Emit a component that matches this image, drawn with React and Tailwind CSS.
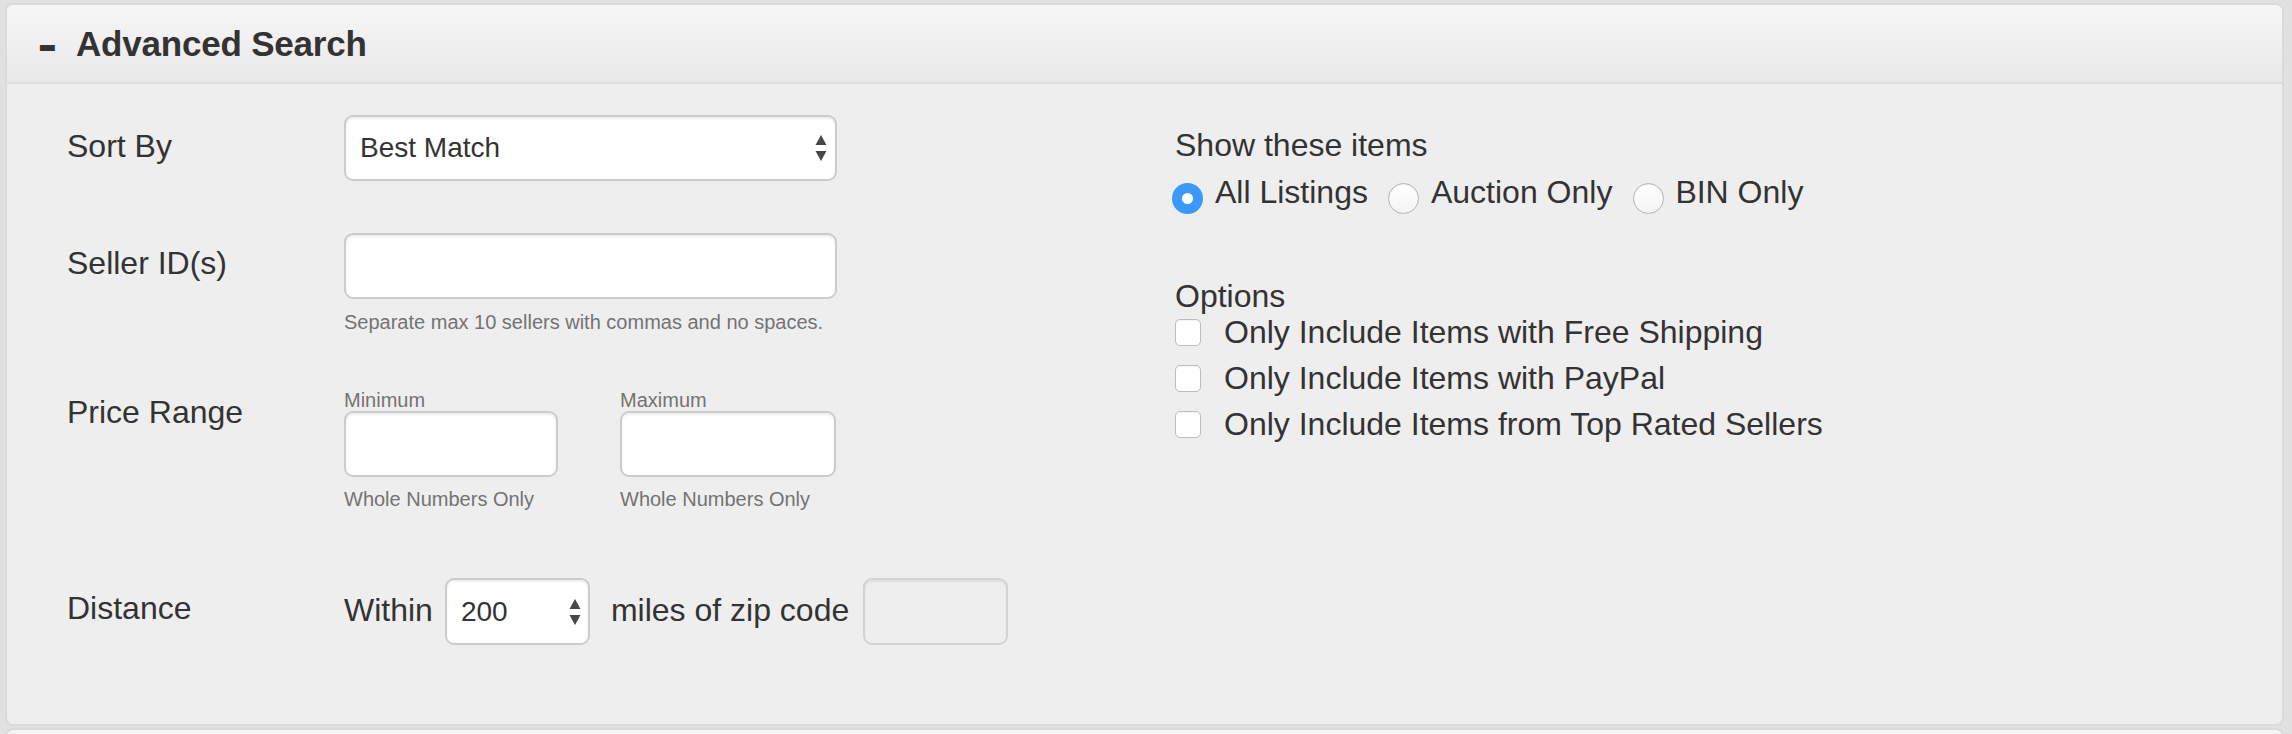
import React from "react";

// =====================================================
// SMALL PARTS
// =====================================================

const SelectArrows = () => (
  <svg width="12" height="28" viewBox="0 0 12 28" className="shrink-0">
    <path d="M6 1 L11.5 11 L0.5 11 Z" fill="#474747" />
    <path d="M0.5 17 L11.5 17 L6 27 Z" fill="#474747" />
  </svg>
);

const Radio = ({ checked }) =>
  checked ? (
    <span className="mt-[9px] flex h-[31px] w-[31px] shrink-0 items-center justify-center rounded-full bg-[#3b99fc]">
      <span className="block h-[11px] w-[11px] rounded-full bg-white" />
    </span>
  ) : (
    <span className="mt-[9px] block h-[31px] w-[31px] shrink-0 rounded-full border border-[#b4b4b4] bg-gradient-to-b from-white to-[#f4f4f4] shadow-[inset_0_1px_1px_rgba(0,0,0,0.05)]" />
  );

const Checkbox = () => (
  <span className="block h-[27px] w-[26px] shrink-0 rounded-[5px] border border-[#bdbdbd] bg-white shadow-[inset_0_1px_1px_rgba(0,0,0,0.04)]" />
);

const inputClass =
  "h-[66px] rounded-[9px] border-2 border-[#cccccc] bg-white shadow-[inset_0_2px_2px_rgba(0,0,0,0.07)]";

// =====================================================
// MAIN
// =====================================================

const App = () => {
  return (
    <div className="h-[734px] w-[2292px] overflow-hidden bg-[#e1e1e1] pl-[5px] pr-[8px] pt-[3px] font-['Liberation_Sans',Arial,sans-serif] text-[#333333]">
      {/* PANEL */}
      <div className="rounded-[8px] border-2 border-[#dadada] bg-[#eeeeee]">
        {/* HEADER */}
        <div className="flex h-[79px] items-center rounded-t-[6px] border-b-2 border-[#dddddd] bg-gradient-to-b from-[#f6f6f6] to-[#e9e9e9] pl-[32px]">
          <span className="inline-block w-[37px] scale-y-200 text-[30px] font-bold leading-none">
            –
          </span>
          <span className="text-[35px] font-bold leading-none tracking-[-0.2px] text-[#333]">
            Advanced Search
          </span>
        </div>

        {/* BODY */}
        <div className="flex h-[640px] pl-[60px] pt-[31px]">
          {/* LEFT */}
          <div className="flex w-[1108px] flex-col">
            {/* SORT */}
            <div className="flex">
              <div className="w-[277px] text-[32px] leading-[62px]">Sort By</div>
              <div className={`${inputClass} flex w-[493px] items-center justify-between pl-[14px] pr-[8px]`}>
                <span className="text-[28px]">Best Match</span>
                <SelectArrows />
              </div>
            </div>

            {/* SELLER */}
            <div className="mt-[52px] flex">
              <div className="w-[277px] text-[32px] leading-[60px]">Seller ID(s)</div>
              <div className="flex flex-col">
                <div className={`${inputClass} w-[493px]`} />
                <div className="mt-[9px] text-[20px] leading-[28px] text-[#737373]">
                  Separate max 10 sellers with commas and no spaces.
                </div>
              </div>
            </div>

            {/* PRICE */}
            <div className="mt-[54px] flex">
              <div className="w-[277px] text-[32px] leading-[44px]">Price Range</div>
              <div className="flex">
                <div className="flex w-[276px] flex-col">
                  <div className="text-[20px] leading-[21px] text-[#737373]">Minimum</div>
                  <div className={`${inputClass} w-[214px]`} />
                  <div className="mt-[10px] text-[20px] leading-[24px] text-[#737373]">
                    Whole Numbers Only
                  </div>
                </div>
                <div className="flex flex-col">
                  <div className="text-[20px] leading-[21px] text-[#737373]">Maximum</div>
                  <div className={`${inputClass} w-[216px]`} />
                  <div className="mt-[10px] text-[20px] leading-[24px] text-[#737373]">
                    Whole Numbers Only
                  </div>
                </div>
              </div>
            </div>

            {/* DISTANCE */}
            <div className="mt-[67px] flex">
              <div className="w-[277px] text-[32px] leading-[60px]">Distance</div>
              <div className="flex items-center">
                <span className="-mt-[4px] text-[32px]">Within</span>
                <div className="ml-[12px] flex h-[67px] w-[145px] items-center justify-between rounded-[9px] border-2 border-[#cccccc] bg-white pl-[14px] pr-[7px] shadow-[inset_0_2px_2px_rgba(0,0,0,0.07)]">
                  <span className="text-[28px]">200</span>
                  <SelectArrows />
                </div>
                <span className="-mt-[4px] ml-[21px] text-[32px]">miles of zip code</span>
                <div className="ml-[14px] h-[67px] w-[145px] rounded-[9px] border-2 border-[#d2d2d2] bg-[#eeeeee] shadow-[inset_0_2px_2px_rgba(0,0,0,0.06)]" />
              </div>
            </div>
          </div>

          {/* RIGHT */}
          <div className="flex flex-col text-[32px]">
            <div className="mt-[12px] leading-[36px]">Show these items</div>

            <div className="mt-[11px] flex items-start leading-[36px]">
              <span className="-ml-[3px]">
                <Radio checked />
              </span>
              <span className="ml-[12px]">All Listings</span>
              <span className="ml-[20px]">
                <Radio />
              </span>
              <span className="ml-[12px]">Auction Only</span>
              <span className="ml-[21px]">
                <Radio />
              </span>
              <span className="ml-[11px]">BIN Only</span>
            </div>

            <div className="mt-[64px] leading-[36px]">Options</div>

            <div className="flex items-center gap-[23px] leading-[36px]">
              <Checkbox />
              <span>Only Include Items with Free Shipping</span>
            </div>
            <div className="mt-[10px] flex items-center gap-[23px] leading-[36px]">
              <Checkbox />
              <span>Only Include Items with PayPal</span>
            </div>
            <div className="mt-[10px] flex items-center gap-[23px] leading-[36px]">
              <Checkbox />
              <span>Only Include Items from Top Rated Sellers</span>
            </div>
          </div>
        </div>
      </div>

      {/* NEXT PANEL (cut off) */}
      <div className="mt-[2px] h-[20px] rounded-t-[8px] border-2 border-[#dadada] bg-[#f4f4f4]" />
    </div>
  );
};

export default App;
